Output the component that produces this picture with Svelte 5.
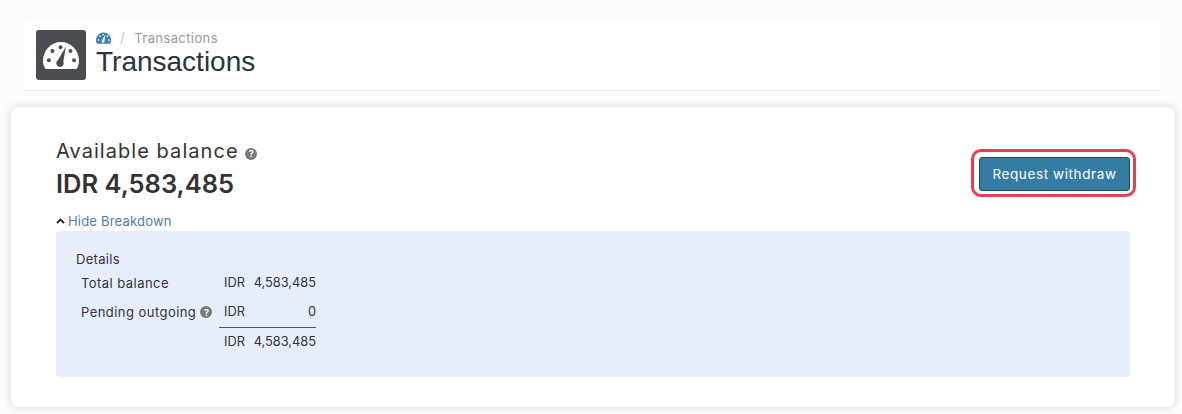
<script>
  const rows = [
    { label: "Total balance", amount: "4,583,485" },
    { label: "Pending outgoing", amount: "0", hint: true, rule: true },
    { label: "", amount: "4,583,485" }
  ];
</script>

{#snippet gauge(size, face, cut)}
  <svg width={size} height={size * 0.8} viewBox="0 0 40 32">
    <path d="M20 1C9 1 0 10 0 22c0 3 .8 5.500 2 8 .4.800 1 1.500 2 1.500h32c1 0 1.600-.7 2-1.500 1.200-2.500 2-5 2-8C40 10 31 1 20 1z" fill={face} />
    <circle cx="19.500" cy="7" r="2.200" fill={cut} />
    <circle cx="10.500" cy="11" r="2.200" fill={cut} />
    <circle cx="6.500" cy="21.500" r="2.200" fill={cut} />
    <circle cx="30.500" cy="11" r="2.200" fill={cut} />
    <circle cx="34.500" cy="21.500" r="2.200" fill={cut} />
    <path d="M25.500 6 22.500 23a4 4 0 1 1-6-1.500z" fill={cut} />
  </svg>
{/snippet}

{#snippet hint()}
  <span class="hint">?</span>
{/snippet}

<div class="page">
  <header class="head">
    <div class="head-icon">{@render gauge(36, "#ffffff", "#4a4c4f")}</div>
    <div class="head-text">
      <nav class="crumbs">
        {@render gauge(15, "#3a81b5", "#ffffff")}
        <span class="slash">/</span>
        <span>Transactions</span>
      </nav>
      <h1>Transactions</h1>
    </div>
  </header>

  <section class="card">
    <div class="top">
      <div>
        <div class="label">Available balance {@render hint()}</div>
        <div class="total">IDR 4,583,485</div>
      </div>
      <div class="focus"><button>Request withdraw</button></div>
    </div>

    <div class="toggle">
      <svg width="9" height="6" viewBox="0 0 9 6"><path d="M1 5l3.500-3.500L8 5" fill="none" stroke="#222" stroke-width="1.800" /></svg>
      <span>Hide Breakdown</span>
    </div>

    <div class="details">
      <div class="details-title">Details</div>
      <div class="rows">
        {#each rows as row}
          <div class="row" class:ruled={row.rule}>
            <div class="name">{row.label}{#if row.hint}&nbsp;{@render hint()}{/if}</div>
            <div class="money">
              <span>IDR</span>
              <span>{row.amount}</span>
            </div>
          </div>
        {/each}
      </div>
    </div>
  </section>
</div>

<style>
  :global(body) {
    background: #fcfcfc;
    font-family: "Inter", "Liberation Sans", sans-serif;
    color: #333;
  }

  .page {
    padding: 22px 7px 7px 11px;
    height: 414px;
    box-sizing: border-box;
  }

  .head {
    display: flex;
    align-items: flex-start;
    gap: 10px;
    margin: 0 14px 16px 14px;
    padding: 8px 11px 10px;
    height: 69px;
    box-sizing: border-box;
    background: #fff;
    border-bottom: 1px solid #e9e9e9;
  }

  .head-icon {
    width: 50px;
    height: 50px;
    flex: none;
    border-radius: 3px;
    background: #4a4c4f;
    display: flex;
    align-items: center;
    justify-content: center;
  }

  .head-text {
    display: flex;
    flex-direction: column;
  }

  .crumbs {
    display: flex;
    align-items: center;
    gap: 9px;
    font-size: 13px;
    line-height: 16px;
    letter-spacing: 0.4px;
    color: #999;
  }

  .slash {
    font-size: 14px;
    line-height: 16px;
    color: #bbb;
    font-weight: 300;
  }

  h1 {
    margin: 1px 0 0;
    font: 400 28px/30px "Liberation Sans", sans-serif;
    color: #2b3440;
  }

  .card {
    height: 300px;
    box-sizing: border-box;
    padding: 32px 45px 30px;
    background: #fff;
    border-radius: 8px;
    box-shadow: 0 0 8px rgba(0, 0, 0, 0.16);
  }

  .top {
    display: flex;
    justify-content: space-between;
    align-items: center;
  }

  .label {
    font-size: 20px;
    line-height: 24px;
    letter-spacing: 1.05px;
    color: #333;
  }

  .total {
    margin-top: 5px;
    font-size: 25.500px;
    line-height: 32px;
    font-weight: 600;
    color: #333;
  }

  .hint {
    display: inline-flex;
    align-items: center;
    justify-content: center;
    width: 12px;
    height: 12px;
    border-radius: 50%;
    background: #7a7a7a;
    color: #fff;
    font-size: 9px;
    font-weight: 700;
    letter-spacing: 0;
    vertical-align: 1px;
  }

  .focus {
    padding: 5px 3px 3px 5px;
    margin: 7px -6px 0 0;
    border: 3px solid #e63e52;
    border-radius: 10px;
  }

  button {
    display: block;
    width: 151px;
    height: 34px;
    padding: 0;
    background: #357ca5;
    border: 1px solid #214f6b;
    border-radius: 3px;
    color: #fff;
    font: 400 13.500px "Inter", sans-serif;
    letter-spacing: 0.6px;
  }

  .toggle {
    display: flex;
    align-items: center;
    gap: 3px;
    margin: 12px 0 1px;
    height: 18px;
    font-size: 13px;
    letter-spacing: 0.2px;
    color: #4e7ea3;
  }

  .details {
    height: 146px;
    box-sizing: border-box;
    padding: 19px 20px;
    background: #e6eefb;
    border-radius: 4px;
    font-size: 13px;
    color: #333;
  }

  .details-title {
    line-height: 18px;
    letter-spacing: 0.3px;
  }

  .rows {
    width: 240px;
  }

  .row {
    display: flex;
    height: 29px;
    align-items: center;
    justify-content: space-between;
    padding-left: 5px;
  }

  .row.ruled {
    height: 31px;
  }

  .row:last-child {
    height: 27px;
  }

  .row.ruled .money {
    padding-bottom: 2px;
    border-bottom: 1px solid #555;
  }

  .row.ruled .name {
    margin-bottom: 2px;
  }

  .name {
    white-space: nowrap;
    letter-spacing: 0.45px;
  }

  .money {
    width: 97px;
    height: 100%;
    box-sizing: border-box;
    display: flex;
    align-items: center;
    justify-content: space-between;
    padding-left: 5px;
    font-size: 12.800px;
  }
</style>
